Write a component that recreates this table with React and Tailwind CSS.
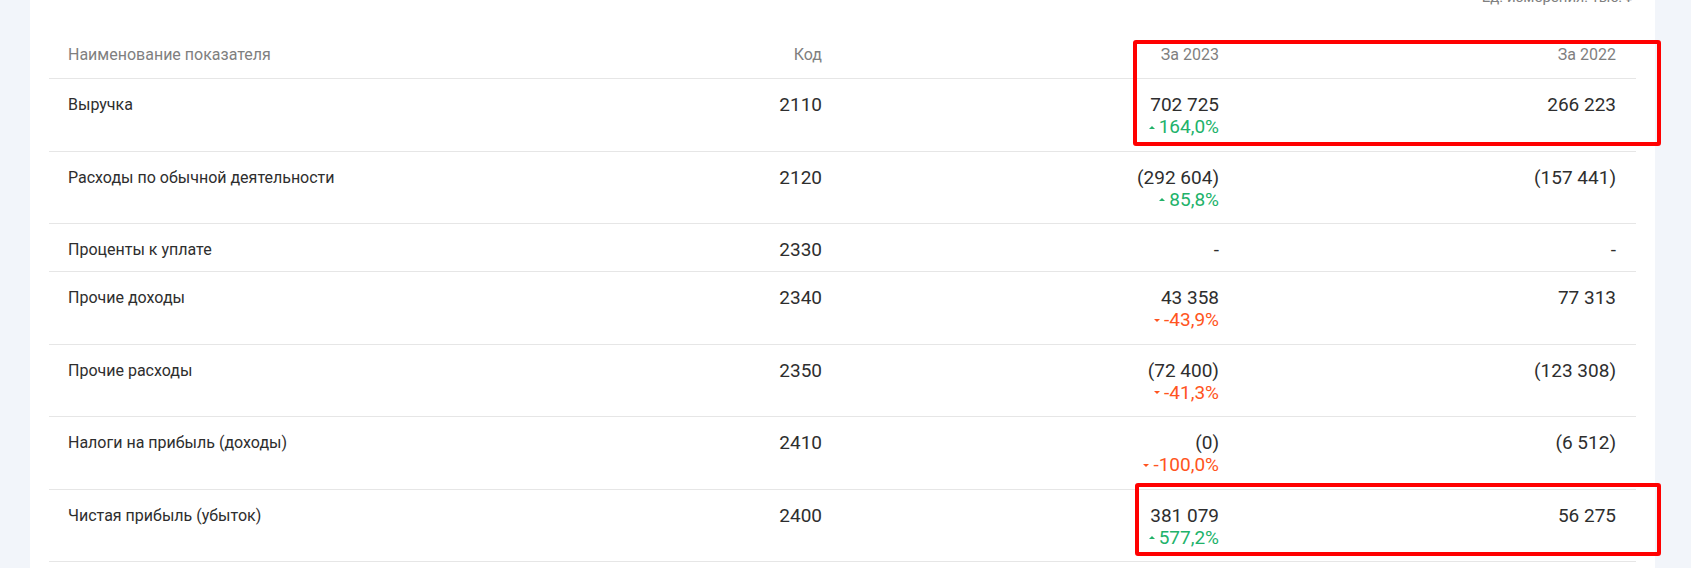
import React from "react";

const rows = [
  { name: "Выручка", code: "2110", cur: "702 725", prev: "266 223", pct: "164,0%", up: true },
  { name: "Расходы по обычной деятельности", code: "2120", cur: "(292 604)", prev: "(157 441)", pct: "85,8%", up: true },
  { name: "Проценты к уплате", code: "2330", cur: "-", prev: "-" },
  { name: "Прочие доходы", code: "2340", cur: "43 358", prev: "77 313", pct: "-43,9%", up: false },
  { name: "Прочие расходы", code: "2350", cur: "(72 400)", prev: "(123 308)", pct: "-41,3%", up: false },
  { name: "Налоги на прибыль (доходы)", code: "2410", cur: "(0)", prev: "(6 512)", pct: "-100,0%", up: false },
  { name: "Чистая прибыль (убыток)", code: "2400", cur: "381 079", prev: "56 275", pct: "577,2%", up: true },
];

const Change = ({ pct, up }) => (
  <div
    className={`flex items-center justify-end gap-[4px] text-[19px] leading-[22px] ${
      up ? "text-[#21b26a]" : "text-[#ff5420]"
    }`}
  >
    {up ? (
      <span className="w-0 h-0 border-x-[3px] border-x-transparent border-b-[3px] border-b-[#21b26a]" />
    ) : (
      <span className="w-0 h-0 border-x-[3px] border-x-transparent border-t-[3px] border-t-[#ff5420]" />
    )}
    <span>{pct}</span>
  </div>
);

export default function App() {
  return (
    <div
      className="relative h-[568px] overflow-hidden bg-[#f2f5fa]"
      style={{ fontFamily: "Roboto, 'Noto Sans', sans-serif" }}
    >
      <div className="ml-[30px] w-[1625px] h-full flex flex-col bg-white px-[19px]">
        <div className="-mt-[13px] h-[21px] text-right text-[15px] leading-[21px] text-[#808080]">
          Ед. измерения: тыс. ₽
        </div>

        <div className="grid grid-cols-[560px_232px_397px_397px] border-b border-[#e6e6e6] pt-[36px] pb-[12px] text-[16px] leading-[22px] text-[#7f7f7f]">
          <div className="pl-[19px]">Наименование показателя</div>
          <div className="text-right pr-[19px]">Код</div>
          <div className="text-right pr-[19px]">За 2023</div>
          <div className="text-right pr-[19px]">За 2022</div>
        </div>

        {rows.map((r) => (
          <div
            key={r.code}
            className={`grid grid-cols-[560px_232px_397px_397px] border-b border-[#e6e6e6] pt-[15px] text-[#2e2e2e] ${
              r.pct ? "pb-[12.5px]" : "pb-[10px]"
            }`}
          >
            <div className="pl-[19px] text-[16px] leading-[22px]">{r.name}</div>
            <div className="text-right pr-[19px] text-[19px] leading-[22px]">{r.code}</div>
            <div className="text-right pr-[19px] text-[19px] leading-[22px]">
              <div>{r.cur}</div>
              {r.pct && <Change pct={r.pct} up={r.up} />}
            </div>
            <div className="text-right pr-[19px] text-[19px] leading-[22px]">{r.prev}</div>
          </div>
        ))}
      </div>

      <div className="absolute left-[1133px] top-[40px] w-[528px] h-[106px] border-[4px] border-[#ff0000] rounded-[3px]" />
      <div className="absolute left-[1135px] top-[483px] w-[526px] h-[73px] border-[4px] border-[#ff0000] rounded-[3px]" />
    </div>
  );
}
